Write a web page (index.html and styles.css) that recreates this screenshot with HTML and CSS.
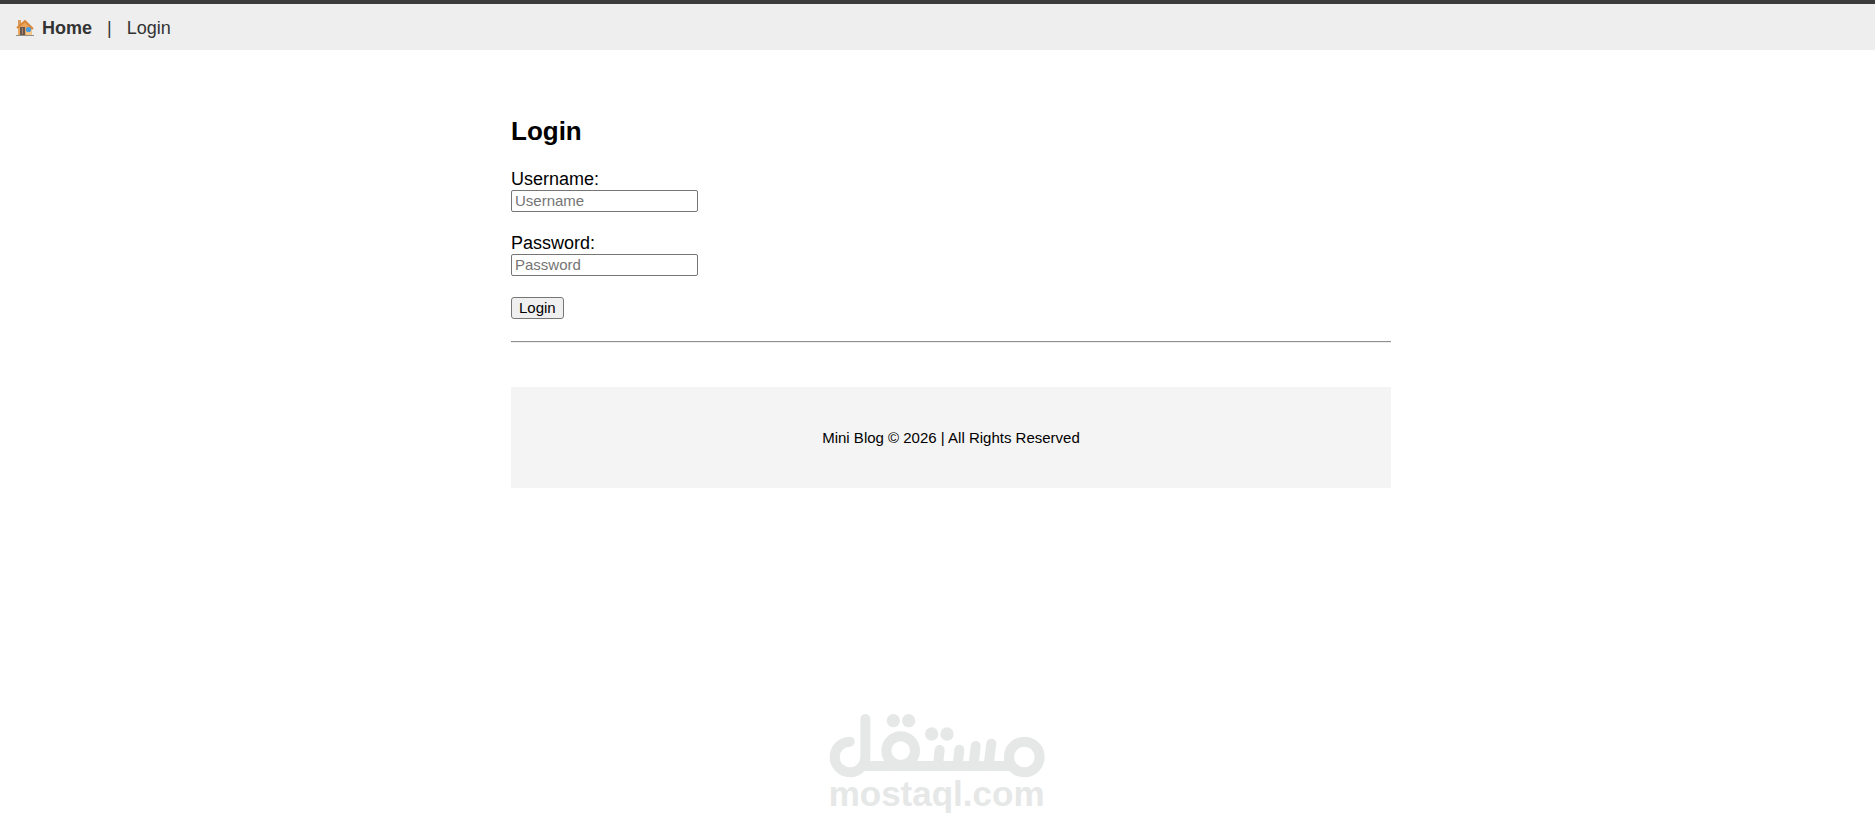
FILE: index.html
```html
<!DOCTYPE html>
<html lang="en">
<head>
<meta charset="utf-8">
<title>Login</title>
<link rel="stylesheet" href="styles.css">
</head>
<body>
<nav class="navbar">
  <a class="nav-link home" href="#">
    <svg class="house" viewBox="0 0 18 18" aria-hidden="true">
      <path fill="#d99a5c" d="M2 1h3v7H2z"/>
      <path fill="#e8a65c" d="M2 9L9 2l7 7v7H2z"/>
      <path fill="#f3c68c" d="M10 9h6v7h-6z"/>
      <path fill="none" stroke="#d98636" stroke-width="2" d="M1 9l8-7 8 8"/>
      <path fill="#69564c" d="M4 8h5v8H4z"/>
      <path fill="#a98368" d="M6 9h1v6H6z"/>
      <circle cx="12.500" cy="10.500" r="2.600" fill="#479be0"/>
      <path fill="#8e8d86" d="M0 16h18v1H0z"/>
    </svg>
    Home</a>
  <span class="separator">|</span>
  <a class="nav-link" href="#">Login</a>
</nav>
<main class="content">
  <h2 class="title">Login</h2>
  <form class="login-form">
    <div class="field">
      <label for="username">Username:</label>
      <input class="text-input" id="username" type="text" placeholder="Username">
    </div>
    <div class="field">
      <label for="password">Password:</label>
      <input class="text-input" id="password" type="password" placeholder="Password">
    </div>
    <button class="submit" type="submit">Login</button>
  </form>
  <hr class="rule">
  <footer class="footer">Mini Blog © 2026 | All Rights Reserved</footer>
</main>
<svg class="watermark" viewBox="0 0 735 375" role="img" aria-label="mostaql.com">
  <g fill="none" stroke="#e6e7e7" stroke-width="30" stroke-linecap="round">
    <path d="M104 125A46 46 0 1 0 151 172V57"/>
    <path d="M140 198H600" stroke-linecap="butt"/>
    <circle cx="257" cy="152" r="43"/>
    <path d="M374 150L369 195M433 149L428 195M482 138L476 195M529 131L521 195"/>
    <circle cx="628" cy="171" r="46"/>
  </g>
  <g fill="#e6e7e7">
    <circle cx="235" cy="62" r="20"/>
    <circle cx="281" cy="62" r="20"/>
    <circle cx="350" cy="102" r="20"/>
    <circle cx="396" cy="102" r="20"/>
    <text class="watermark-text" x="41" y="319">mostaql.com</text>
  </g>
</svg>
</body>
</html>
```

FILE: styles.css
```css
* {
  box-sizing: border-box;
}

body {
  display: flex;
  flex-direction: column;
  min-height: 100vh;
  margin: 0;
  padding-bottom: 6px;
  background: #fff;
  color: #000;
  font: 18px/20px "Liberation Sans", Arial, sans-serif;
}

.navbar {
  display: flex;
  align-items: center;
  gap: 15px;
  padding: 14px 16px 12px;
  border-top: 4px solid #3b3b3b;
  background: #eee;
  color: #333;
}

.nav-link {
  color: #333;
  text-decoration: none;
}

.home {
  display: flex;
  align-items: center;
  gap: 8px;
  font-weight: bold;
}

.house {
  width: 18px;
  height: 18px;
}

.content {
  width: 100%;
  max-width: 907px;
  margin: 0 auto;
  padding: 66px 0 0 27px;
}

.title {
  margin: 0 0 23px;
  font-size: 26px;
  line-height: 30px;
}

.login-form {
  display: flex;
  flex-direction: column;
  align-items: flex-start;
  gap: 21px;
}

.field {
  display: flex;
  flex-direction: column;
  gap: 1px;
}

.text-input {
  width: 187px;
  height: 22px;
  padding: 0 3px 1px;
  border: 1px solid #767676;
  border-radius: 2px;
  background: #fff;
  font: 15px "Liberation Sans", Arial, sans-serif;
}

.text-input::placeholder {
  color: #757575;
}

.submit {
  height: 22px;
  padding: 0 7px 1px;
  border: 1px solid #767676;
  border-radius: 3px;
  background: #efefef;
  color: #000;
  font: 15px "Liberation Sans", Arial, sans-serif;
}

.rule {
  margin: 22px 0 44px;
  border: 0;
  border-top: 1px solid #8f9091;
  border-bottom: 1px solid #eee;
}

.footer {
  padding: 41px 16px 40px;
  background: #f4f4f4;
  font-size: 15px;
  text-align: center;
}

.watermark {
  width: 245px;
  height: 125px;
  margin: auto auto 0;
}

.watermark-text {
  font: bold 105px "Liberation Sans", Arial, sans-serif;
}
```
